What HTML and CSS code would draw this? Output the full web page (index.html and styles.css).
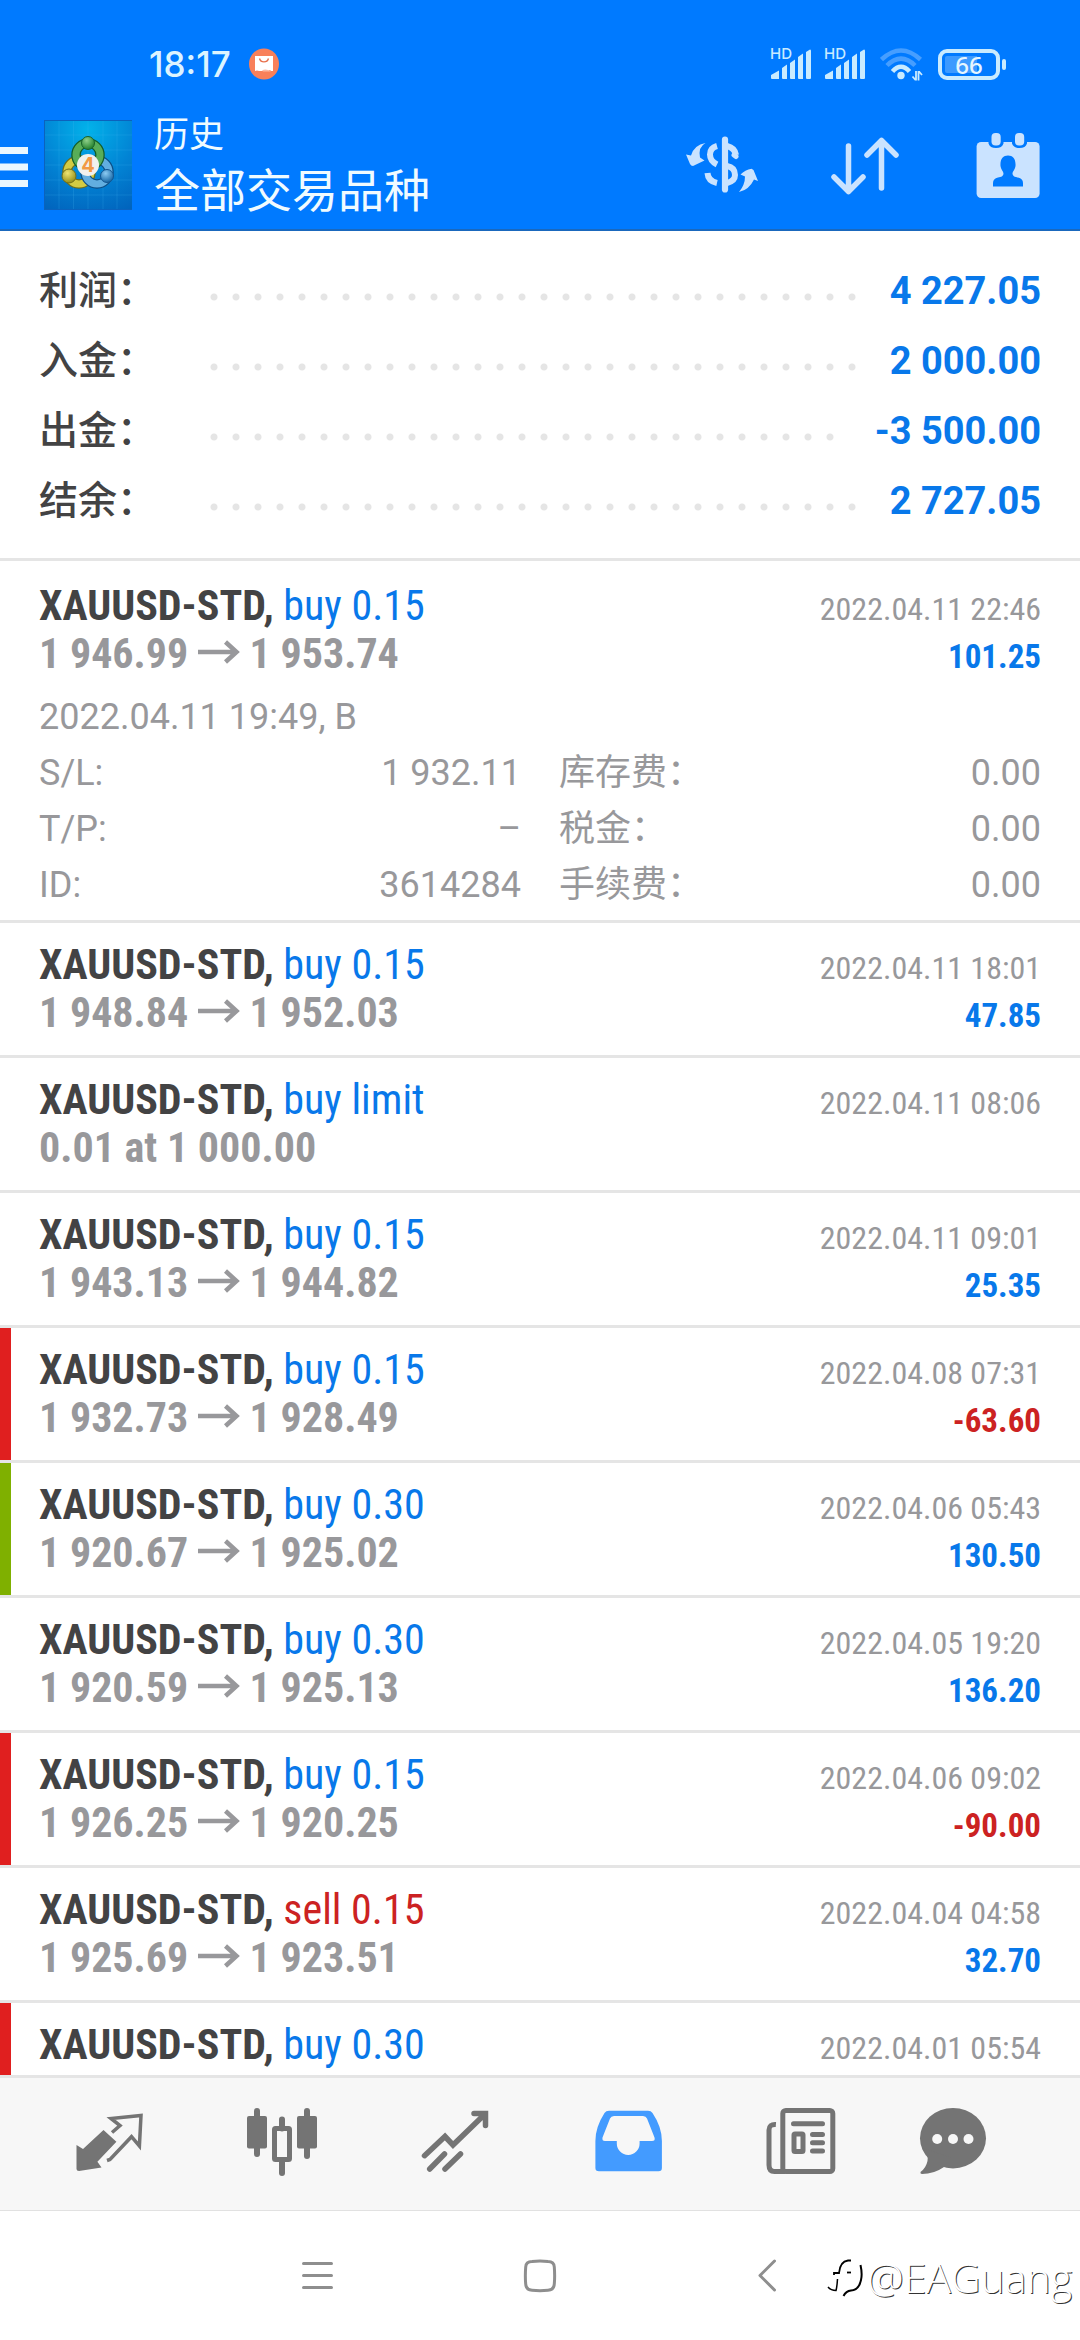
FILE: index.html
```html
<!DOCTYPE html>
<html lang="zh-CN">
<head>
<meta charset="utf-8">
<meta name="viewport" content="width=device-width, initial-scale=1">
<title>历史 - 全部交易品种</title>
<link rel="stylesheet" href="styles.css">
</head>
<body>
<svg class="defs" aria-hidden="true">
  <symbol id="bars" viewBox="0 0 42 32">
    <path d="M1 30V27L9 22.5V31H2Q1 31 1 30ZM12 20L17 16.5V31H13Q12 31 12 30ZM20 15L25 11.500V31H21Q20 31 20 30ZM28 9L33 5.500V31H29Q28 31 28 30ZM36 4L40 1.500Q41 1.300 41 3V30Q41 31 40 31H37Q36 31 36 30Z" fill="#c9ebff"/>
  </symbol>
  <symbol id="arrow" viewBox="0 0 42 24">
    <path d="M0 12H38M27.500 2L38.500 12L27.500 22" fill="none" stroke="currentColor" stroke-width="4.500"/>
  </symbol>
</svg>
<div class="app">
  <header class="top">
    <div class="status">
      <span class="clock">18:17</span>
      <svg class="badge" viewBox="0 0 30 32" aria-hidden="true">
        <ellipse cx="15" cy="16" rx="15" ry="15.500" fill="#f8805a"/>
        <path d="M6 8H24V23H22L21 22L19 23H10L8 22.500L6 23Z" fill="#fff"/>
        <path d="M10.500 10.500A4.700 4.700 0 0 0 19.500 10.500" fill="none" stroke="#e8704c" stroke-width="1.400"/>
        <path d="M13 22.500Q17 20 22 23.500H14Z" fill="#fbb9a3"/>
      </svg>
      <span class="status-icons">
        <svg class="signal" viewBox="0 0 42 32" aria-hidden="true"><text class="hd" x="0" y="11">HD</text><use href="#bars"/></svg>
        <svg class="signal" viewBox="0 0 42 32" aria-hidden="true"><text class="hd" x="0" y="11">HD</text><use href="#bars"/></svg>
        <svg class="wifi" viewBox="0 0 44 34" fill="none" aria-hidden="true">
          <g stroke-width="4.500">
            <path d="M1.500 12.500Q21 -5.500 40.500 12.500M7 18.500Q21 4.500 35 18.500" stroke="#469eff"/>
            <path d="M12.500 24.500Q21 15 29.500 24.500" stroke="#c9ebff"/>
          </g>
          <circle cx="21" cy="28.500" r="3.700" fill="#c9ebff"/>
          <path d="M36 24V33.500M32.500 29.500L35.500 33M38.500 33.500V24M42 28L39 24.500" stroke="#c9ebff" stroke-width="1.800"/>
        </svg>
        <span class="battery">66</span>
      </span>
    </div>
    <div class="appbar">
      <button class="menu" type="button" aria-label="菜单">
        <svg viewBox="0 0 28 90" aria-hidden="true"><path d="M0 30.500H28M0 47H28M0 63.500H28" stroke="#eaf7ff" stroke-width="7"/></svg>
      </button>
      <svg class="logo" viewBox="0 0 88 90" aria-hidden="true">
        <defs>
          <radialGradient id="bg" cx="50%" cy="10%" r="100%"><stop offset="0" stop-color="#02b2ea"/><stop offset=".55" stop-color="#0283d4"/><stop offset="1" stop-color="#0164bd"/></radialGradient>
          <radialGradient id="gr" cx="40%" cy="30%" r="70%"><stop offset="0" stop-color="#8fd08a"/><stop offset="1" stop-color="#23802c"/></radialGradient>
          <radialGradient id="ye" cx="40%" cy="30%" r="70%"><stop offset="0" stop-color="#eee573"/><stop offset="1" stop-color="#968f17"/></radialGradient>
          <radialGradient id="bl" cx="40%" cy="30%" r="70%"><stop offset="0" stop-color="#8ccbf3"/><stop offset="1" stop-color="#1767a5"/></radialGradient>
        </defs>
        <path d="M0 0H88V90H0Z" fill="url(#bg)"/>
        <path d="M29.500 0V90M44 0V90M59 0V90M73 0V90M15 0V90M0 15H88M0 30H88M0 45H88M0 60H88M0 75H88" stroke="#4bb8ee" stroke-opacity=".2"/>
        <path d="M0 .5H88M.5 0V90M0 89.500H88" stroke="#0b62bd"/>
        <g fill="none">
          <circle cx="35" cy="52" r="12" stroke="#6c6d1c" stroke-width="9.500"/>
          <circle cx="35" cy="52" r="12" stroke="#d4cb43" stroke-width="7"/>
          <circle cx="53" cy="52" r="12" stroke="#0d4f86" stroke-width="9.500"/>
          <circle cx="53" cy="52" r="12" stroke="#62aee0" stroke-width="7"/>
          <circle cx="44" cy="35" r="12" stroke="#145c28" stroke-width="9.500"/>
          <circle cx="44" cy="35" r="12" stroke="#58ad58" stroke-width="7"/>
        </g>
        <circle cx="44" cy="23" r="6.500" fill="url(#gr)" stroke="#17612b"/>
        <circle cx="25" cy="56" r="7" fill="url(#ye)" stroke="#737019"/>
        <circle cx="63" cy="56" r="6.500" fill="url(#bl)" stroke="#135591"/>
        <circle cx="44" cy="45" r="11" fill="#f1f1ee"/>
        <text class="logo-num" x="44" y="52" text-anchor="middle">4</text>
      </svg>
      <h1 class="titles"><span class="title">历史</span><span class="subtitle">全部交易品种</span></h1>
      <div class="actions">
        <button type="button" aria-label="品种">
          <svg viewBox="0 0 72 72" fill="none" aria-hidden="true">
            <path d="M40 10.500V60.500" stroke="#cae3ff" stroke-width="6.200" stroke-linecap="round"/>
            <path d="M32 17Q25 19 25 25.500Q25 32 32 35.500M22.500 44Q23 52 32 54M42 17Q50 19 51 26M42 37Q50 38.500 50 46Q50 52 42 54" stroke="#cae3ff" stroke-width="6"/>
            <path d="M49 26L51 27.500" stroke="#cae3ff" stroke-width="5" stroke-linecap="round"/>
            <path d="M20.500 14Q13 18 15 28.500L19.500 31.500L8 37Q6 37 5 35L1 25.500L6 26.500Q9 16 20.500 14ZM54 63Q60 56 60 47.500L55.500 45.500Q60 41 66.500 39.700L68.500 41L73 52L69 50.500Q64 61 54 63Z" fill="#cae3ff"/>
          </svg>
        </button>
        <button type="button" aria-label="排序">
          <svg viewBox="0 0 72 72" fill="none" stroke="#cae3ff" stroke-width="5.500" stroke-linecap="round" stroke-linejoin="round" aria-hidden="true">
            <path d="M19.500 17V62.500M5 48L19.500 62.500L34 48M52.500 59V11.500M38 26L52.500 11.500L67 26"/>
          </svg>
        </button>
        <button type="button" aria-label="日期">
          <svg viewBox="0 0 72 72" aria-hidden="true">
            <rect x="3.600" y="13" width="63" height="56" rx="4.500" fill="#cae3ff"/>
            <path d="M15.500 12H30.500V14.500Q29 19 23 19T15.500 14.500ZM39 12H54V14.500Q52.500 19 46.500 19T39 14.500Z" fill="#007aff"/>
            <rect x="18.500" y="4" width="9.200" height="12.500" rx="4" fill="#cae3ff"/>
            <rect x="42" y="4" width="9.200" height="12.500" rx="4" fill="#cae3ff"/>
            <path d="M35 26.500C40 26.500 43 30 42.500 37C42 41 39.500 42 39.500 45Q40 48 45 48.500Q50 49.500 50 54V57.500H20V54Q20 49.500 25 48.500Q30 48 30.500 45C30.500 42 28 41 27.500 37C27 30 30 26.500 35 26.500Z" fill="#007aff"/>
          </svg>
        </button>
      </div>
    </div>
  </header>

  <dl class="summary">
    <div class="sum-row"><dt>利润：</dt><dd>4 227.05</dd></div>
    <div class="sum-row"><dt>入金：</dt><dd>2 000.00</dd></div>
    <div class="sum-row"><dt>出金：</dt><dd>-3 500.00</dd></div>
    <div class="sum-row"><dt>结余：</dt><dd>2 727.05</dd></div>
  </dl>

  <ul class="deals">
    <li class="deal expanded">
      <div class="line"><span class="name"><b>XAUUSD-STD,</b> <span class="buy">buy 0.15</span></span><time>2022.04.11 22:46</time></div>
      <div class="line"><span class="price">1 946.99 <svg class="arrow" aria-hidden="true"><use href="#arrow"/></svg> 1 953.74</span><span class="profit">101.25</span></div>
      <div class="details">
        <p class="opened">2022.04.11 19:49, B</p>
        <dl class="fields">
          <div class="field"><dt>S/L:</dt><dd>1 932.11</dd></div>
          <div class="field"><dt>库存费：</dt><dd>0.00</dd></div>
          <div class="field"><dt>T/P:</dt><dd>–</dd></div>
          <div class="field"><dt>税金：</dt><dd>0.00</dd></div>
          <div class="field"><dt>ID:</dt><dd>3614284</dd></div>
          <div class="field"><dt>手续费：</dt><dd>0.00</dd></div>
        </dl>
      </div>
    </li>
    <li class="deal">
      <div class="line"><span class="name"><b>XAUUSD-STD,</b> <span class="buy">buy 0.15</span></span><time>2022.04.11 18:01</time></div>
      <div class="line"><span class="price">1 948.84 <svg class="arrow" aria-hidden="true"><use href="#arrow"/></svg> 1 952.03</span><span class="profit">47.85</span></div>
    </li>
    <li class="deal">
      <div class="line"><span class="name"><b>XAUUSD-STD,</b> <span class="buy">buy limit</span></span><time>2022.04.11 08:06</time></div>
      <div class="line"><span class="price">0.01 at 1 000.00</span></div>
    </li>
    <li class="deal">
      <div class="line"><span class="name"><b>XAUUSD-STD,</b> <span class="buy">buy 0.15</span></span><time>2022.04.11 09:01</time></div>
      <div class="line"><span class="price">1 943.13 <svg class="arrow" aria-hidden="true"><use href="#arrow"/></svg> 1 944.82</span><span class="profit">25.35</span></div>
    </li>
    <li class="deal stop">
      <div class="line"><span class="name"><b>XAUUSD-STD,</b> <span class="buy">buy 0.15</span></span><time>2022.04.08 07:31</time></div>
      <div class="line"><span class="price">1 932.73 <svg class="arrow" aria-hidden="true"><use href="#arrow"/></svg> 1 928.49</span><span class="profit loss">-63.60</span></div>
    </li>
    <li class="deal take">
      <div class="line"><span class="name"><b>XAUUSD-STD,</b> <span class="buy">buy 0.30</span></span><time>2022.04.06 05:43</time></div>
      <div class="line"><span class="price">1 920.67 <svg class="arrow" aria-hidden="true"><use href="#arrow"/></svg> 1 925.02</span><span class="profit">130.50</span></div>
    </li>
    <li class="deal">
      <div class="line"><span class="name"><b>XAUUSD-STD,</b> <span class="buy">buy 0.30</span></span><time>2022.04.05 19:20</time></div>
      <div class="line"><span class="price">1 920.59 <svg class="arrow" aria-hidden="true"><use href="#arrow"/></svg> 1 925.13</span><span class="profit">136.20</span></div>
    </li>
    <li class="deal stop">
      <div class="line"><span class="name"><b>XAUUSD-STD,</b> <span class="buy">buy 0.15</span></span><time>2022.04.06 09:02</time></div>
      <div class="line"><span class="price">1 926.25 <svg class="arrow" aria-hidden="true"><use href="#arrow"/></svg> 1 920.25</span><span class="profit loss">-90.00</span></div>
    </li>
    <li class="deal">
      <div class="line"><span class="name"><b>XAUUSD-STD,</b> <span class="sell">sell 0.15</span></span><time>2022.04.04 04:58</time></div>
      <div class="line"><span class="price">1 925.69 <svg class="arrow" aria-hidden="true"><use href="#arrow"/></svg> 1 923.51</span><span class="profit">32.70</span></div>
    </li>
    <li class="deal stop">
      <div class="line"><span class="name"><b>XAUUSD-STD,</b> <span class="buy">buy 0.30</span></span><time>2022.04.01 05:54</time></div>
      <div class="line"></div>
    </li>
  </ul>

  <nav class="tabs" aria-label="主导航">
    <button type="button" aria-label="行情">
      <svg viewBox="0 0 72 72" aria-hidden="true">
        <path d="M3.500 37L10 41L30.500 22L43.400 33.700L24.400 53.700L28.500 59.500L6 63Q3.500 63 3.500 61Z" fill="currentColor"/>
        <path d="M39 24.500L47 17.500L38 10.500L68 7.500L66.400 38L58.500 28.700L37 51.500L34 52.500" fill="none" stroke="currentColor" stroke-width="3.500"/>
      </svg>
    </button>
    <button type="button" aria-label="图表">
      <svg viewBox="0 0 72 72" aria-hidden="true">
        <g fill="currentColor">
          <rect x="8" width="6" height="49" rx="3"/><rect x="1" y="8" width="20" height="32.500" rx="2"/>
          <rect x="33" y="8.500" width="6" height="15" rx="3"/><rect x="33" y="50" width="6" height="18" rx="3"/>
          <rect x="58" width="6" height="51" rx="3"/><rect x="51" y="8" width="20" height="32.500" rx="2"/>
        </g>
        <rect x="28.500" y="20.500" width="15" height="31" rx="1" fill="none" stroke="currentColor" stroke-width="5"/>
      </svg>
    </button>
    <button type="button" aria-label="交易">
      <svg viewBox="0 0 72 72" fill="none" stroke="currentColor" stroke-width="5.500" stroke-linecap="round" aria-hidden="true">
        <path d="M5.500 47.700L26 28.500L34 37L65 7M55 5.500H66.500V17.500M25.500 46L10.700 61M41.500 46L26 61"/>
      </svg>
    </button>
    <button type="button" class="active" aria-label="历史" aria-current="page">
      <svg viewBox="0 0 72 72" aria-hidden="true">
        <path fill="currentColor" fill-rule="evenodd" d="M17 2.700H56Q59 2.700 60.500 5Q69.900 19 69.900 33V60Q69.900 63.300 66.500 63.300H7Q3.400 63.300 3.400 60V33Q3.400 19 12.500 5Q14 2.700 17 2.700ZM22 8Q19 8 18 10.500L10.500 29.500Q9.800 33 13 33H24.800V35.500A11.400 11.400 0 0 0 47.600 35.500V33H60Q63.500 33 62.500 29.500L55 10.500Q54 8 51 8Z"/>
      </svg>
    </button>
    <button type="button" aria-label="新闻">
      <svg viewBox="0 0 72 72" fill="none" stroke="currentColor" stroke-width="5" aria-hidden="true">
        <rect x="17.800" y="2.500" width="50" height="61" rx="3"/>
        <path d="M10.900 16.500Q4 16 4 22V57Q4 63.500 9.500 63.500H20"/>
        <path d="M28.500 15.700H57.500M47.500 26.500H57.500M47.500 34.800H57.500M47.500 43H57.500" stroke-linecap="round"/>
        <rect x="29" y="26" width="9" height="17.500" rx="1"/>
      </svg>
    </button>
    <button type="button" aria-label="消息">
      <svg viewBox="0 0 72 72" aria-hidden="true">
        <ellipse cx="36" cy="30.200" rx="33" ry="30.200" fill="currentColor"/>
        <path d="M5 40Q12 47 10.500 53Q9 60 3.500 64Q3 66 5 66Q17 66 27 59L36 50Z" fill="currentColor"/>
        <g fill="#f7f7f7"><circle cx="20.200" cy="31" r="5"/><circle cx="36" cy="31" r="5"/><circle cx="51.500" cy="31" r="5"/></g>
      </svg>
    </button>
  </nav>

  <footer class="system">
    <button type="button" aria-label="最近任务"><svg viewBox="0 0 60 60" aria-hidden="true"><path d="M18.500 17.500H46.500M18.500 29.500H46.500M18.500 41.500H46.500"/></svg></button>
    <button type="button" aria-label="主屏幕"><svg viewBox="0 0 60 60" aria-hidden="true"><path d="M22 15.500Q30 14.500 38 15.500Q44 15.500 44.300 21Q45 30 44.300 38Q44 44 38 44.300Q30 45 22 44.300Q16 44 15.700 38Q15 30 15.700 21Q16 15.500 22 15.500Z"/></svg></button>
    <button type="button" aria-label="返回"><svg viewBox="0 0 60 60" aria-hidden="true"><path d="M39.500 15L25 29.500L39.500 44"/></svg></button>
    <div class="watermark">
      <svg viewBox="0 0 36 40" fill="none" stroke="#000" aria-hidden="true">
        <path d="M24 3.500H21Q13 4.500 12 16H7V18" stroke-width="1.800"/>
        <path d="M20 15.500H24" stroke-width="1.800"/>
        <path d="M33.500 8Q35.500 17 34 23Q32 33 24 33.500Q19 34 16.500 39" stroke-width="2"/>
        <path d="M10.500 22Q10 30 9 33.500Q4 33.500 1 30" stroke-width="1.500"/>
      </svg>
      <span>@EAGuang</span>
    </div>
  </footer>
</div>
</body>
</html>
```
FILE: styles.css
```css
:root {
  --blue: #007aff;
  --value: #0878ea;
  --red: #cc2222;
  --grey: #98989b;
  --dark: #434344;
  --rule: #e5e5e5;
  --gutter: 39px;
}

* { box-sizing: border-box; margin: 0; padding: 0; }

body {
  background: #fff;
  font-family: Roboto, "Noto Sans CJK SC", sans-serif;
  color: var(--dark);
}

button {
  display: block;
  background: none;
  border: 0;
  color: inherit;
  font: inherit;
}

svg { display: block; }
ul { list-style: none; }
.defs { position: absolute; width: 0; height: 0; }

.app {
  display: flex;
  flex-direction: column;
  height: 100vh;
}

/* Header */
.top {
  flex: none;
  background: var(--blue);
  border-bottom: 2px solid #1a68bd;
}

.status {
  display: flex;
  align-items: center;
  height: 80px;
  padding: 48px 74px 0 149px;
}

.clock {
  font: 500 35px/32px Inter, sans-serif;
  color: #dcf4ff;
}

.badge { width: 30px; height: 32px; margin-left: 18px; }

.status-icons {
  display: flex;
  align-items: center;
  gap: 12px;
  margin-left: auto;
}

.signal { width: 42px; height: 32px; overflow: visible; }
.hd { font: 500 15px Inter, sans-serif; fill: #c9ebff; }
.wifi { width: 44px; height: 34px; margin: 0 2px; }

.battery {
  position: relative;
  width: 62px;
  height: 31px;
  margin-right: 6px;
  border: 4px solid #c9ebff;
  border-radius: 9px;
  background: linear-gradient(90deg, #3c9aff 66%, transparent 66%) content-box;
  padding: 3px;
  font: 500 24px/17px "Noto Sans", sans-serif;
  text-align: center;
  color: #e6f6ff;
}

.battery::after {
  content: "";
  position: absolute;
  right: -10px;
  top: 6px;
  width: 4px;
  height: 11px;
  border-radius: 2px;
  background: #c9ebff;
}

.appbar {
  display: flex;
  align-items: center;
  height: 149px;
  padding: 20px 35px 0 0;
}

.menu { width: 28px; height: 90px; }
.logo { width: 88px; height: 90px; margin-left: 16px; }
.logo-num { font: 700 20px Inter, sans-serif; fill: #f29a45; }

.titles {
  display: flex;
  flex-direction: column;
  margin-left: 22px;
  font-family: "Noto Sans CJK SC", sans-serif;
  font-weight: 400;
  color: #f0fbff;
}

.title { font-size: 35px; line-height: 44px; }
.subtitle { font-size: 46px; line-height: 66px; }

.actions { display: flex; gap: 72px; margin-left: auto; }
.actions svg { width: 72px; height: 72px; overflow: visible; }

/* Totals */
.summary {
  flex: none;
  padding: 25px var(--gutter) 22px;
  border-bottom: 3px solid var(--rule);
}

.sum-row {
  display: flex;
  font-size: 39px;
  line-height: 70px;
  font-weight: 500;
}

.sum-row dt { width: 171px; }

.sum-row dd {
  flex: 1;
  display: flex;
  font-size: 38px;
  font-weight: 700;
  color: var(--value);
}

/* Dotted leader between a label and its amount */
.sum-row dd::before {
  content: "";
  flex: 1;
  margin-right: 29px;
  background: radial-gradient(circle at 4px 41px, #e5e5e5 3px, transparent 4px) repeat-x;
  background-size: 22px 70px;
}

/* Deals */
.deals {
  flex: 1;
  min-height: 0;
  overflow: hidden;
}

.deal {
  padding: 18px var(--gutter);
  border-bottom: 3px solid var(--rule);
  font-family: "Roboto Condensed", Roboto, sans-serif;
}

.expanded { padding: 21px var(--gutter) 7px; }

.stop { box-shadow: inset 11px 0 #e01f1f; }
.take { box-shadow: inset 11px 0 #7fb000; }

.line {
  display: flex;
  justify-content: space-between;
  align-items: baseline;
  height: 48px;
  font-size: 42px;
  line-height: 48px;
}

.buy { color: var(--value); }
.sell { color: var(--red); }
.price { font-weight: 700; color: var(--grey); }
.line time { font-size: 32px; line-height: 40px; color: var(--grey); }
.profit { font-size: 33px; line-height: 40px; font-weight: 700; color: var(--value); }
.loss { color: var(--red); }

.arrow {
  display: inline-block;
  width: 42px;
  height: 24px;
  vertical-align: 4px;
}

.details {
  margin-top: 11px;
  font-family: Roboto, "Noto Sans CJK SC", sans-serif;
  font-size: 36px;
  line-height: 56px;
  color: var(--grey);
}

.fields {
  display: grid;
  grid-template-columns: 1fr 1fr;
  column-gap: 38px;
}

.field { display: flex; justify-content: space-between; }

/* Bottom tabs */
.tabs {
  flex: none;
  display: grid;
  grid-template-columns: repeat(5, 4fr) 3fr;
  justify-items: center;
  align-items: center;
  height: 136px;
  padding: 0 62px 0 22px;
  background: #f7f7f7;
  border-top: 3px solid var(--rule);
  border-bottom: 1px solid #e1e1e1;
  color: #747474;
}

.tabs svg { width: 72px; height: 72px; }
.active { color: #439bff; }

/* System navigation */
.system {
  position: relative;
  flex: none;
  display: flex;
  justify-content: center;
  align-items: center;
  gap: 165px;
  height: 129px;
}

.system button svg {
  width: 60px;
  height: 60px;
  fill: none;
  stroke: #8e8e8e;
  stroke-width: 3;
  stroke-linecap: round;
  stroke-linejoin: round;
}

.watermark {
  position: absolute;
  right: 8px;
  bottom: 36px;
  display: flex;
  align-items: center;
  gap: 4px;
  font: 300 41px/54px "Open Sans", sans-serif;
  color: #fff;
  text-shadow: 1px 1px 0 #333;
}

.watermark svg { width: 36px; height: 40px; }
```
